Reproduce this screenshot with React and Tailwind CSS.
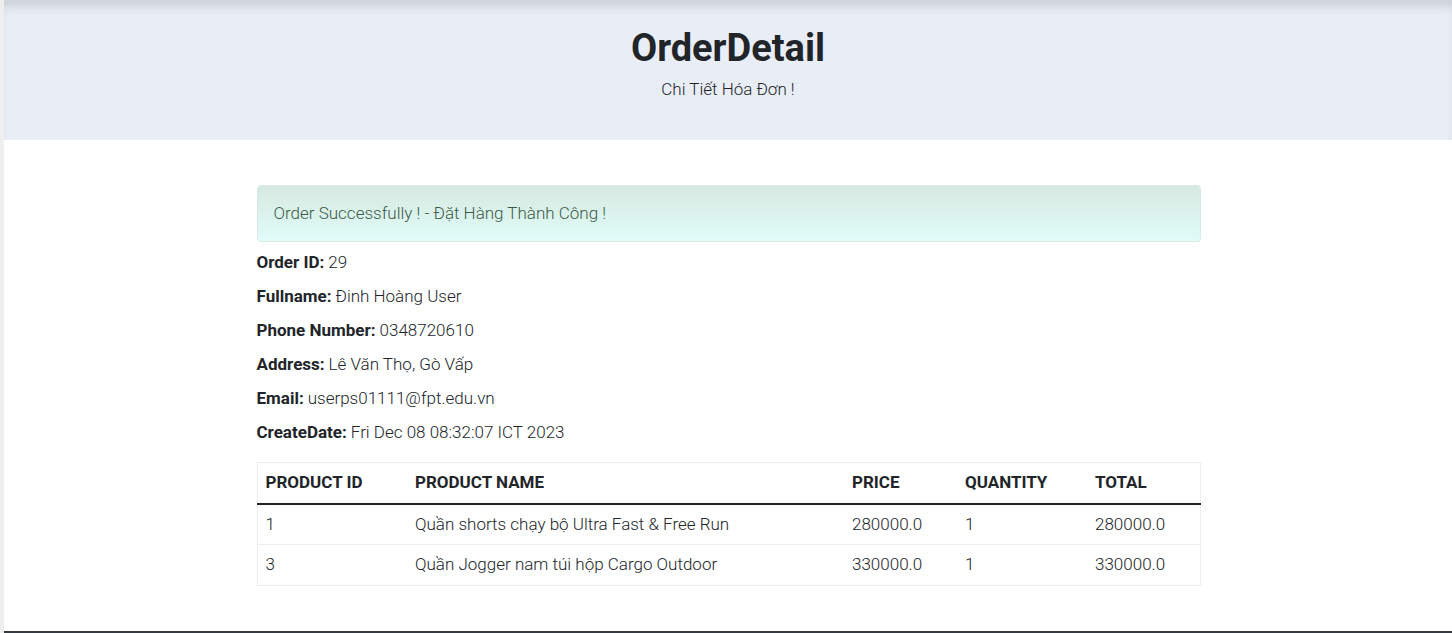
export default function App() {
  const info = [
    ["Order ID:", "29"],
    ["Fullname:", "Đinh Hoàng User"],
    ["Phone Number:", "0348720610"],
    ["Address:", "Lê Văn Thọ, Gò Vấp"],
    ["Email:", "userps01111@fpt.edu.vn"],
    ["CreateDate:", "Fri Dec 08 08:32:07 ICT 2023"],
  ];
  const rows = [
    ["1", "Quần shorts chạy bộ Ultra Fast & Free Run", "280000.0", "1", "280000.0"],
    ["3", "Quần Jogger nam túi hộp Cargo Outdoor", "330000.0", "1", "330000.0"],
  ];
  return (
    <div className="flex h-[633px] bg-[#efefef] font-['Roboto',sans-serif] text-[#212529] overflow-hidden">
      <div className="w-[4px] shrink-0 bg-[#efefef]" />
      <div className="flex-1 flex flex-col bg-white">
        <div className="h-[140px] bg-[#e9edf5] border-t-2 border-[#d3d5da] shadow-[inset_0_8px_12px_-6px_rgba(0,0,0,0.18)] flex flex-col items-center">
          <h1 className="mt-[23px] text-[38px] leading-[46px] font-bold text-[#212529]">OrderDetail</h1>
          <p className="mt-[6px] text-[17px] leading-[24px] font-light text-[#212529]">Chi Tiết Hóa Đơn !</p>
        </div>
        <div className="flex-1 flex justify-center pl-[5px]">
          <div className="w-[944px] pt-[45px] mr-[4px]">
            <div className="h-[57px] flex items-center px-[16px] rounded-[4px] border border-[#d7ebe6] bg-gradient-to-b from-[#d6e9e0] to-[#e0fcf9] text-[17px] font-light text-[#3d5a48]">
              Order Successfully ! - Đặt Hàng Thành Công !
            </div>
            <div className="mt-[4px] flex flex-col">
              {info.map(([k, v]) => (
                <div key={k} className="h-[34px] flex items-center text-[17px]">
                  <span className="font-bold">{k}</span>
                  <span className="font-light ml-[4px]">{v}</span>
                </div>
              ))}
            </div>
            <table className="mt-[12px] w-full border border-[#eeeeee] border-collapse text-[17px] text-left">
              <thead>
                <tr className="h-[41px] border-b-2 border-[#212529]">
                  <th className="w-[150px] px-[8px] font-bold">PRODUCT ID</th>
                  <th className="w-[437px] px-[8px] font-bold">PRODUCT NAME</th>
                  <th className="w-[113px] px-[8px] font-bold">PRICE</th>
                  <th className="w-[130px] px-[8px] font-bold">QUANTITY</th>
                  <th className="px-[8px] font-bold">TOTAL</th>
                </tr>
              </thead>
              <tbody>
                {rows.map((r, i) => (
                  <tr key={i} className="h-[41px] border-b border-[#eeeeee] font-light">
                    {r.map((c, j) => (
                      <td key={j} className="px-[8px]">{c}</td>
                    ))}
                  </tr>
                ))}
              </tbody>
            </table>
          </div>
        </div>
        <div className="h-[2px] bg-[#343a40]" />
      </div>
    </div>
  );
}
